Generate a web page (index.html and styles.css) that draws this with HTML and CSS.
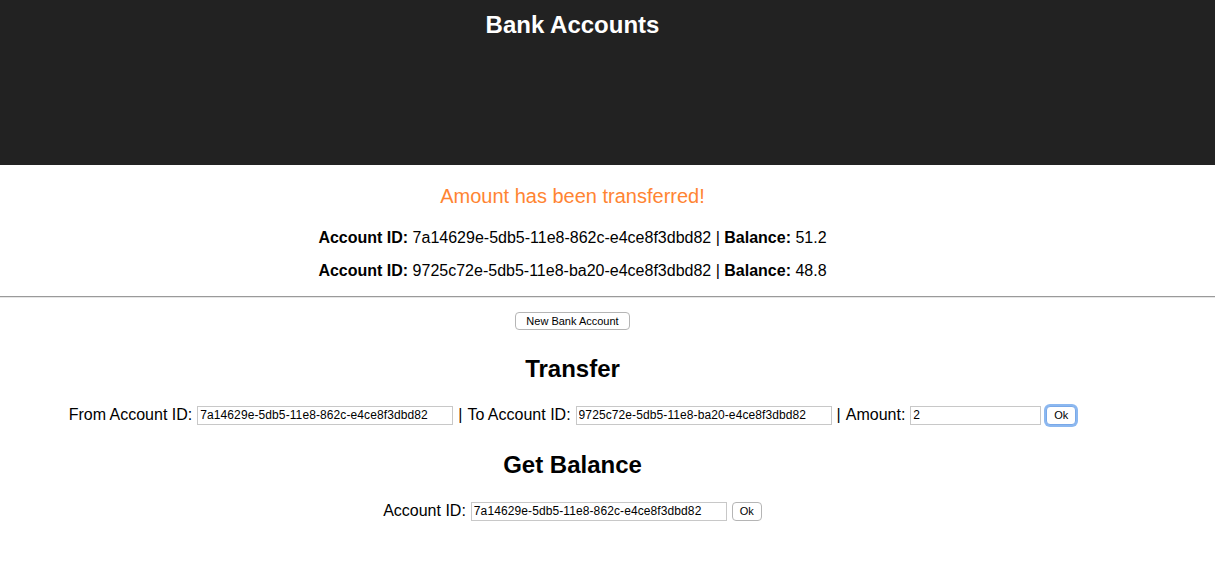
FILE: index.html
```html
<!DOCTYPE html>
<html>
<head>
<meta charset="utf-8">
<title>Bank Accounts</title>
<link rel="stylesheet" href="styles.css">
</head>
<body>
<div class="app">
  <header class="app-header">
    <h1 class="app-title">Bank Accounts</h1>
  </header>
  <section class="status">
    <p class="message">Amount has been transferred!</p>
    <p class="account"><b>Account ID:</b> 7a14629e-5db5-11e8-862c-e4ce8f3dbd82 | <b>Balance:</b> 51.2</p>
    <p class="account"><b>Account ID:</b> 9725c72e-5db5-11e8-ba20-e4ce8f3dbd82 | <b>Balance:</b> 48.8</p>
  </section>
  <hr class="divider">
  <section class="actions">
    <div class="new-row"><button class="btn">New Bank Account</button></div>
    <h2 class="section-title">Transfer</h2>
    <div class="form-row">
      <label class="lbl">From Account ID:</label>
      <input class="field" type="text" value="7a14629e-5db5-11e8-862c-e4ce8f3dbd82">
      <span class="sep">|</span>
      <label class="lbl">To Account ID:</label>
      <input class="field" type="text" value="9725c72e-5db5-11e8-ba20-e4ce8f3dbd82">
      <span class="sep">|</span>
      <label class="lbl">Amount:</label>
      <input class="field field-amount" type="text" value="2">
      <button class="btn btn-ok btn-focus">Ok</button>
    </div>
    <h2 class="section-title title-balance">Get Balance</h2>
    <div class="form-row">
      <label class="lbl">Account ID:</label>
      <input class="field" type="text" value="7a14629e-5db5-11e8-862c-e4ce8f3dbd82">
      <button class="btn btn-ok">Ok</button>
    </div>
  </section>
</div>
</body>
</html>
```

FILE: styles.css
```css
html, body {
  margin: 0;
  padding: 0;
  background: #fff;
}
body {
  font-family: "Liberation Sans", Arial, Helvetica, sans-serif;
  color: #000;
}
.app {
  text-align: center;
}
.app-header {
  background: #222;
  height: 165px;
  box-sizing: border-box;
  padding: 10px 70px 0 0;
  color: #fff;
}
.app-title {
  margin: 0;
  font-size: 24px;
  line-height: 30px;
  font-weight: bold;
}
.status {
  padding: 20px 70px 0 0;
}
.message {
  margin: 0;
  font-size: 20px;
  line-height: 23px;
  color: #ff8432;
}
.account {
  margin: 21px 0 0 0;
  font-size: 16px;
  line-height: 18px;
}
.account + .account {
  margin-top: 15px;
}
.divider {
  margin: 16px 0 0 0;
  border: 0;
  border-top: 1px solid #9a9a9a;
  border-bottom: 1px solid #e6e6e6;
  height: 0;
}
.actions {
  padding: 14px 70px 0 0;
}
.new-row {
  display: flex;
  justify-content: center;
}
.btn {
  font-family: "Liberation Sans", Arial, Helvetica, sans-serif;
  font-size: 11px;
  line-height: 13px;
  color: #000;
  background: #fff;
  border: 1px solid #b5b5b5;
  border-radius: 4px;
  padding: 1px 10px;
  height: 18px;
  box-sizing: border-box;
  margin: 0;
}
.section-title {
  margin: 25px 0 0 0;
  font-size: 24px;
  line-height: 28px;
  font-weight: bold;
}
.title-balance {
  margin-top: 26px;
}
.form-row {
  display: flex;
  justify-content: center;
  align-items: center;
  margin-top: 22px;
  font-size: 16px;
  line-height: 20px;
}
.lbl {
  margin-right: 5px;
}
.sep {
  margin: 0 5px;
}
.field {
  font-family: "Liberation Sans", Arial, Helvetica, sans-serif;
  font-size: 12px;
  letter-spacing: 0.1px;
  width: 256px;
  height: 19px;
  box-sizing: border-box;
  border: 1px solid #c8c8c8;
  padding: 0 2px;
  margin: 0;
  color: #000;
  background: #fff;
}
.field-amount {
  width: 131px;
}
.btn-ok {
  margin-left: 5px;
  width: 30px;
  height: 19px;
  padding: 0;
  font-size: 11px;
}
.btn-focus {
  border: 1px solid #7aa9e8;
  box-shadow: 0 0 0 2px #8cb8f0;
}
```
